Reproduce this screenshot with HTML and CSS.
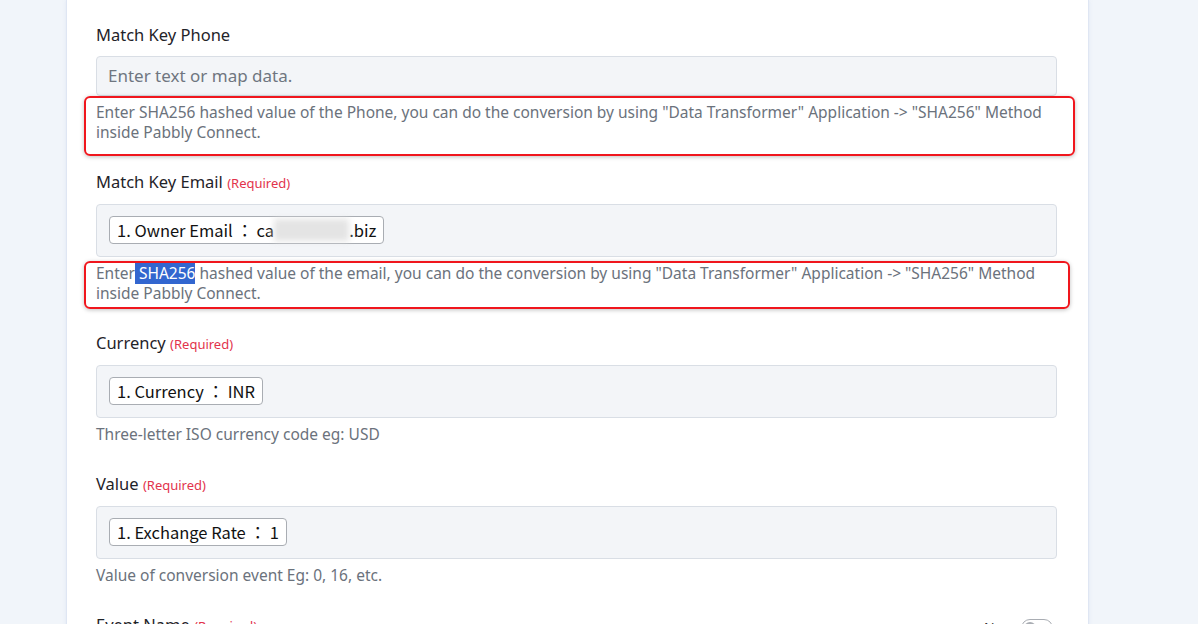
FILE: index.html
```html
<!DOCTYPE html>
<html lang="en">
<head>
	<meta charset="UTF-8">
	<meta name="viewport" content="width=device-width, initial-scale=1.0">
	<title>Action Setup</title>
	<link rel="stylesheet" href="styles.css">
</head>
<body>
	<div class="page">
		<div class="card">
			<div class="field">
				<div class="field-label">Match Key Phone</div>
				<div class="field-input empty">Enter text or map data.</div>
				<div class="field-help">
					Enter SHA256 hashed value of the Phone, you can do the conversion by using "Data Transformer" Application -&gt; "SHA256" Method inside Pabbly Connect.
					<span class="mark mark-phone"></span>
				</div>
			</div>

			<div class="field">
				<div class="field-label">Match Key Email <span class="required">(Required)</span></div>
				<div class="field-input">
					<span class="chip">1. Owner Email ： ca<span class="masked"></span>.biz</span>
				</div>
				<div class="field-help">
					Enter<span class="selected"> SHA256</span> hashed value of the email, you can do the conversion by using "Data Transformer" Application -&gt; "SHA256" Method inside Pabbly Connect.
					<span class="mark mark-email"></span>
				</div>
			</div>

			<div class="field">
				<div class="field-label">Currency <span class="required">(Required)</span></div>
				<div class="field-input">
					<span class="chip">1. Currency ： INR</span>
				</div>
				<div class="field-help">Three-letter ISO currency code eg: USD</div>
			</div>

			<div class="field">
				<div class="field-label">Value <span class="required">(Required)</span></div>
				<div class="field-input">
					<span class="chip">1. Exchange Rate ： 1</span>
				</div>
				<div class="field-help">Value of conversion event Eg: 0, 16, etc.</div>
			</div>

			<div class="field">
				<div class="field-label field-label-row">
					<span>Event Name <span class="required">(Required)</span></span>
					<span class="switch-wrap">
						<span class="switch-text">No</span>
						<span class="switch"><span class="knob"></span></span>
					</span>
				</div>
			</div>
		</div>
	</div>
</body>
</html>
```

FILE: styles.css
```css
* {
	box-sizing: border-box;
}
body {
	margin: 0;
	background-color: #f1f5fa;
	font-family: "Noto Sans", "Open Sans", sans-serif;
	color: #1f2329;
	height: 624px;
	overflow: hidden;
}
.page {
	padding-left: 67px;
}
.card {
	width: 1021px;
	min-height: 700px;
	background-color: #fff;
	padding: 23px 31px 0 29px;
	box-shadow: -1px 0 0 #dfe6f3, 1px 0 0 #dfe6f3, 0 0 4px rgba(160, 180, 220, 0.35);
}

/* one form row: label, input, help */
.field {
	margin-bottom: 28px;
}
.field-label {
	font-size: 16.5px;
	line-height: 24px;
	margin-bottom: 9px;
}
.field-label-row {
	display: flex;
	justify-content: space-between;
	align-items: flex-start;
}
.required {
	font-size: 13px;
	color: #e2334c;
}
.field-input {
	background-color: #f3f5f8;
	border: 1px solid #d9dee5;
	border-radius: 4px;
	padding: 11px 12px 12px;
	height: 53px;
}
.field-input.empty {
	height: 40px;
	padding: 8px 11px;
	font-size: 17px;
	line-height: 22px;
	color: #6f7680;
}
.chip {
	display: inline-flex;
	align-items: center;
	height: 28px;
	padding: 0 7px;
	background-color: #fff;
	border: 1px solid #a9adb3;
	border-radius: 4px;
	font-family: "Noto Sans CJK JP", "Noto Sans", sans-serif;
	font-size: 16.5px;
	color: #111;
}
.masked {
	display: inline-block;
	width: 75px;
	height: 22px;
	background-color: #e4e4e4;
	filter: blur(3px);
}
.field-help {
	position: relative;
	margin-top: 6px;
	font-size: 15.5px;
	line-height: 20px;
	color: #6b727c;
}
.selected {
	background-color: #3266cf;
	color: #fff;
}

/* red outline drawn over a help note */
.mark {
	position: absolute;
	border: 2px solid #f0161d;
	border-radius: 6px;
	box-shadow: 0 1px 4px rgba(0, 0, 0, 0.25);
	pointer-events: none;
}
.mark-phone {
	left: -12px;
	top: -6px;
	right: -18px;
	bottom: -14px;
}
.mark-email {
	left: -12px;
	top: -2px;
	right: -13px;
	bottom: -6px;
}

.switch-wrap {
	display: flex;
	align-items: center;
	gap: 18px;
	margin-top: 6px;
	font-size: 14px;
	line-height: 18px;
	color: #333;
}
.switch {
	width: 32px;
	height: 18px;
	border: 1px solid #a9adb3;
	border-radius: 9px;
	padding: 2px;
	margin-right: 4px;
}
.knob {
	display: block;
	width: 12px;
	height: 12px;
	border-radius: 50%;
	background-color: #a9adb3;
}
```
